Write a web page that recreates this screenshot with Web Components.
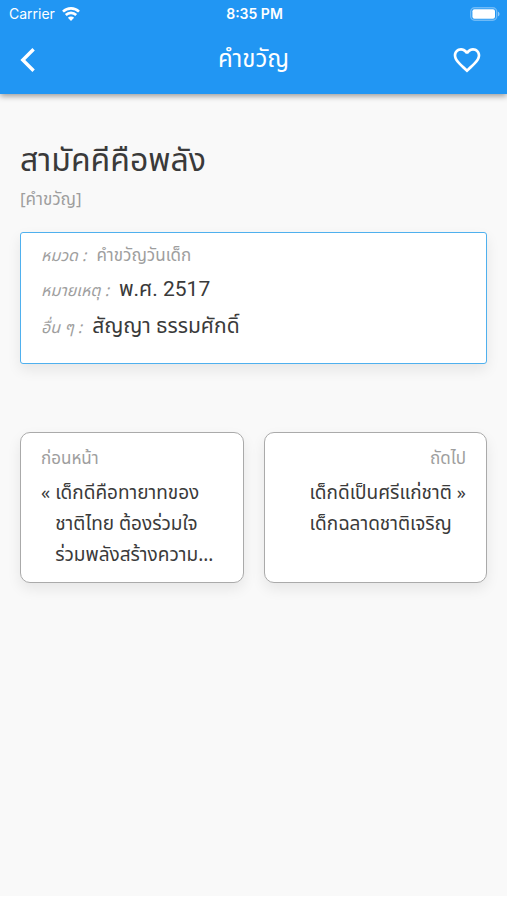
<!DOCTYPE html>
<html lang="th">
<head>
<meta charset="UTF-8">
<meta name="viewport" content="width=device-width, initial-scale=1">
<title>คำขวัญ</title>
<style>
    body {
        margin: 0;
        background: #f9f9f9;
        color: #3a3a3a;
        font-family: "Noto Sans Thai", "Noto Sans", sans-serif;
    }
</style>
</head>
<body>
<app-screen>
    <status-bar slot="top" carrier="Carrier" time="8:35 PM"></status-bar>
    <app-header slot="top">คำขวัญ</app-header>
    <entry-title kind="[คำขวัญ]">สามัคคีคือพลัง</entry-title>
    <detail-card>
        <detail-row label="หมวด :" muted>คำขวัญวันเด็ก</detail-row>
        <detail-row label="หมายเหตุ :">พ.ศ. 2517</detail-row>
        <detail-row label="อื่น ๆ :">สัญญา ธรรมศักดิ์</detail-row>
    </detail-card>
    <entry-pager>
        <pager-card label="ก่อนหน้า" direction="prev">เด็กดีคือทายาทของ<br>ชาติไทย ต้องร่วมใจ<br>ร่วมพลังสร้างความ...</pager-card>
        <pager-card label="ถัดไป" direction="next">เด็กดีเป็นศรีแก่ชาติ<br>เด็กฉลาดชาติเจริญ</pager-card>
    </entry-pager>
</app-screen>

<script>
class AppScreen extends HTMLElement {
    constructor() {
        super();
        this.attachShadow({ mode: "open" });
    }

    connectedCallback() {
        this.shadowRoot.innerHTML = `
            <style>
                :host {
                    display: flex;
                    flex-direction: column;
                    box-sizing: border-box;
                    min-height: 100vh;
                    border-bottom: 4px solid white;
                }
                .top {
                    background: #2196f3;
                    color: white;
                    box-shadow: 0 2px 6px rgba(0, 0, 0, 0.4);
                }
                main {
                    padding: 40px 20px;
                }
            </style>
            <div class="top"><slot name="top"></slot></div>
            <main><slot></slot></main>
        `;
    }
}

class StatusBar extends HTMLElement {
    constructor() {
        super();
        this.attachShadow({ mode: "open" });
    }

    connectedCallback() {
        this.shadowRoot.innerHTML = `
            <style>
                :host {
                    display: grid;
                    grid-template-columns: 1fr auto 1fr;
                    align-items: center;
                    height: 27px;
                    padding: 0 7px 0 9px;
                    font: 14px/20px Inter, sans-serif;
                }
                .carrier {
                    display: flex;
                    align-items: center;
                    gap: 7px;
                }
                .time {
                    font-weight: 600;
                }
                .battery {
                    justify-self: end;
                }
                svg {
                    display: block;
                }
            </style>
            <div class="carrier">
                <span>${this.getAttribute("carrier")}</span>
                <svg width="18" height="14" viewBox="0 0 18 14" fill="none" stroke="white" stroke-width="2.6">
                    <path d="M1 4.6a11.5 11.5 0 0 1 16 0M3.8 8a7.4 7.4 0 0 1 10.4 0"/>
                    <path d="M9 14L5.9 10.7a4.4 4.4 0 0 1 6.2 0z" fill="white" stroke="none"/>
                </svg>
            </div>
            <span class="time">${this.getAttribute("time")}</span>
            <svg class="battery" width="30" height="14" viewBox="0 0 30 14">
                <rect x="0.7" y="0.7" width="26" height="12.6" rx="4" fill="none" stroke="white" stroke-opacity="0.35" stroke-width="1.4"/>
                <rect x="2.4" y="2.2" width="22.6" height="9.6" rx="2" fill="white"/>
                <path d="M28 4.7c2 .7 2 3.9 0 4.6z" fill="white" fill-opacity="0.5"/>
            </svg>
        `;
    }
}

class AppHeader extends HTMLElement {
    constructor() {
        super();
        this.attachShadow({ mode: "open" });
    }

    connectedCallback() {
        this.shadowRoot.innerHTML = `
            <style>
                :host {
                    display: flex;
                    justify-content: space-between;
                    align-items: center;
                    height: 65px;
                    padding: 0 20px 2px;
                }
                h1 {
                    margin: 0;
                    font-size: 24px;
                    font-weight: 400;
                    line-height: 42px;
                }
                button {
                    display: flex;
                    align-items: center;
                    justify-content: center;
                    width: 40px;
                    height: 40px;
                    padding: 0;
                    border: 0;
                    background: none;
                    color: inherit;
                    cursor: pointer;
                }
                .back {
                    justify-content: flex-start;
                }
            </style>
            <button type="button" class="back" aria-label="กลับ">
                <svg width="16" height="26" viewBox="0 0 16 26" fill="none" stroke="currentColor" stroke-width="3.4">
                    <path d="M13.6 2.2L2.8 13l10.8 10.8"/>
                </svg>
            </button>
            <h1><slot></slot></h1>
            <button type="button" class="like" aria-label="รายการโปรด">
                <svg width="32" height="32" viewBox="0 0 24 24" fill="currentColor">
                    <path d="M16.5 3c-1.74 0-3.41.81-4.5 2.09C10.91 3.81 9.24 3 7.5 3 4.42 3 2 5.42 2 8.5c0 3.78 3.4 6.86 8.55 11.54L12 21.35l1.45-1.32C18.6 15.36 22 12.28 22 8.5 22 5.42 19.58 3 16.5 3zm-4.4 15.55l-.1.1-.1-.1C7.14 14.24 4 11.39 4 8.5 4 6.5 5.5 5 7.5 5c1.54 0 3.04.99 3.57 2.36h1.87C13.46 5.99 14.96 5 16.5 5c2 0 3.5 1.5 3.5 3.5 0 2.89-3.14 5.74-7.9 10.05z"/>
                </svg>
            </button>
        `;
    }
}

class EntryTitle extends HTMLElement {
    constructor() {
        super();
        this.attachShadow({ mode: "open" });
    }

    connectedCallback() {
        this.shadowRoot.innerHTML = `
            <style>
                :host {
                    display: block;
                }
                h2 {
                    margin: 0;
                    font-size: 32px;
                    font-weight: 400;
                    line-height: 54px;
                }
                p {
                    margin: 0;
                    color: #9e9e9e;
                    font-size: 17px;
                    line-height: 24px;
                }
            </style>
            <h2><slot></slot></h2>
            <p>${this.getAttribute("kind")}</p>
        `;
    }
}

class DetailCard extends HTMLElement {
    constructor() {
        super();
        this.attachShadow({ mode: "open" });
    }

    connectedCallback() {
        this.shadowRoot.innerHTML = `
            <style>
                :host {
                    display: block;
                    margin-top: 20px;
                    padding: 7px 20px 17px;
                    border: 1px solid #4fb0ee;
                    border-radius: 3px;
                    background: white;
                    box-shadow: 0 6px 14px rgba(0, 0, 0, 0.08);
                }
            </style>
            <slot></slot>
        `;
    }
}

class DetailRow extends HTMLElement {
    constructor() {
        super();
        this.attachShadow({ mode: "open" });
    }

    connectedCallback() {
        this.shadowRoot.innerHTML = `
            <style>
                :host {
                    display: flex;
                    align-items: baseline;
                    gap: 10px;
                    min-height: 37px;
                    font-size: 21px;
                    line-height: 34px;
                }
                :host([muted]) {
                    min-height: 32px;
                    color: #9e9e9e;
                    font-size: 17px;
                    line-height: 30px;
                }
                .label {
                    color: #9e9e9e;
                    font-size: 16px;
                    font-style: italic;
                }
                .value {
                    font-family: Roboto, "Noto Sans Thai", "Noto Sans", sans-serif;
                }
            </style>
            <span class="label">${this.getAttribute("label")}</span>
            <span class="value"><slot></slot></span>
        `;
    }
}

class EntryPager extends HTMLElement {
    constructor() {
        super();
        this.attachShadow({ mode: "open" });
    }

    connectedCallback() {
        this.shadowRoot.innerHTML = `
            <style>
                :host {
                    display: grid;
                    grid-template-columns: 1fr 1fr;
                    gap: 20px;
                    margin-top: 68px;
                }
            </style>
            <slot></slot>
        `;
    }
}

class PagerCard extends HTMLElement {
    constructor() {
        super();
        this.attachShadow({ mode: "open" });
    }

    connectedCallback() {
        const next = this.getAttribute("direction") === "next";
        this.shadowRoot.innerHTML = `
            <style>
                :host {
                    display: grid;
                }
                a {
                    display: block;
                    padding: 11px 20px;
                    border: 1px solid #aaa;
                    border-radius: 10px;
                    background: white;
                    box-shadow: 0 6px 14px rgba(0, 0, 0, 0.08);
                    color: inherit;
                    text-decoration: none;
                    white-space: nowrap;
                }
                .label {
                    color: #9e9e9e;
                    font-size: 17px;
                    line-height: 30px;
                }
                .text {
                    display: flex;
                    gap: 5px;
                    margin-top: 4px;
                    font-size: 19px;
                    line-height: 31px;
                }
                .mark {
                    font-size: 18px;
                }
                .next {
                    text-align: right;
                }
                .next .text {
                    flex-direction: row-reverse;
                }
            </style>
            <a href="#" class="${next ? "next" : "prev"}">
                <div class="label">${this.getAttribute("label")}</div>
                <div class="text">
                    <span class="mark">${next ? "»" : "«"}</span>
                    <span><slot></slot></span>
                </div>
            </a>
        `;
    }
}

customElements.define("app-screen", AppScreen);
customElements.define("status-bar", StatusBar);
customElements.define("app-header", AppHeader);
customElements.define("entry-title", EntryTitle);
customElements.define("detail-card", DetailCard);
customElements.define("detail-row", DetailRow);
customElements.define("entry-pager", EntryPager);
customElements.define("pager-card", PagerCard);
</script>
</body>
</html>
